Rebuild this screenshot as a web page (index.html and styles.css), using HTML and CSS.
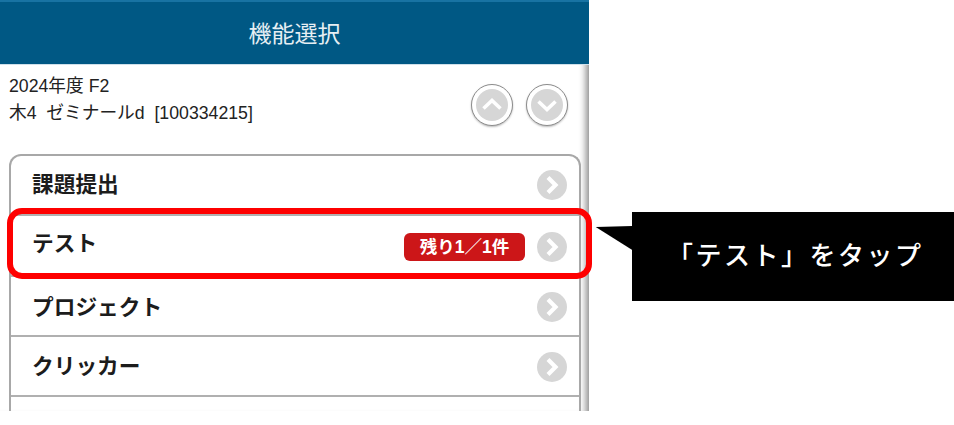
FILE: index.html
```html
<!DOCTYPE html>
<html lang="ja">
<head>
<meta charset="utf-8">
<title>機能選択</title>
<link rel="stylesheet" href="styles.css">
</head>
<body>
<div class="stage">
  <main class="phone">
    <header class="bar">機能選択</header>
    <section class="course">
      <div class="course-text">
        <div>2024年度 F2</div>
        <div>木4&nbsp; ゼミナールd&nbsp; [100334215]</div>
      </div>
      <div class="pager">
        <span class="round"><svg viewBox="0 0 38 38"><circle cx="19" cy="19" r="16" fill="#d6d6d6"/><path d="M10.5 22.5 19 14.5 27.5 22.5" fill="none" stroke="#fff" stroke-width="3.6"/></svg></span>
        <span class="round"><svg viewBox="0 0 38 38"><circle cx="19" cy="19" r="16" fill="#d6d6d6"/><path d="M10.5 15.5 19 23.5 27.5 15.5" fill="none" stroke="#fff" stroke-width="3.6"/></svg></span>
      </div>
    </section>
    <ul class="menu">
      <li class="row row-first"><span class="label">課題提出</span><svg class="go" viewBox="0 0 30 30"><circle cx="15" cy="15" r="15" fill="#d6d6d6"/><path d="M11 7.5 18.5 15 11 22.5" fill="none" stroke="#fff" stroke-width="4.2"/></svg></li>
      <li class="row row-tall"><span class="label label-raised">テスト</span><span class="badge">残り1／1件</span><svg class="go" viewBox="0 0 30 30"><circle cx="15" cy="15" r="15" fill="#d6d6d6"/><path d="M11 7.5 18.5 15 11 22.5" fill="none" stroke="#fff" stroke-width="4.2"/></svg></li>
      <li class="row row-low"><span class="label label-mid">プロジェクト</span><svg class="go" viewBox="0 0 30 30"><circle cx="15" cy="15" r="15" fill="#d6d6d6"/><path d="M11 7.5 18.5 15 11 22.5" fill="none" stroke="#fff" stroke-width="4.2"/></svg></li>
      <li class="row row-low"><span class="label">クリッカー</span><svg class="go" viewBox="0 0 30 30"><circle cx="15" cy="15" r="15" fill="#d6d6d6"/><path d="M11 7.5 18.5 15 11 22.5" fill="none" stroke="#fff" stroke-width="4.2"/></svg></li>
      <li class="row row-last"><span class="label"></span><svg class="go" viewBox="0 0 30 30"><circle cx="15" cy="15" r="15" fill="#d6d6d6"/><path d="M11 7.5 18.5 15 11 22.5" fill="none" stroke="#fff" stroke-width="4.2"/></svg></li>
    </ul>
  </main>
  <div class="highlight"></div>
  <svg class="pointer" viewBox="0 0 38 26"><path d="M0 1 38 0V25Z" fill="#000"/></svg>
  <div class="note">「テスト」をタップ</div>
</div>
</body>
</html>
```
FILE: styles.css
```css
html, body {
  margin: 0;
  padding: 0;
  background: #fff;
}
.stage {
  position: relative;
  width: 954px;
  height: 425px;
  overflow: hidden;
  font-family: "Liberation Sans", "Noto Sans CJK JP", sans-serif;
}
.phone {
  width: 589px;
  height: 411px;
  overflow: hidden;
  background: #fff;
  box-shadow: inset -9px 0 7px -6px #8a8a8a;
}
.bar {
  height: 65px;
  box-sizing: border-box;
  border-top: 2px solid #1873a3;
  border-bottom: 1px solid #cfe0ea;
  background: #005884;
  color: #e6eef3;
  font-size: 23px;
  line-height: 64px;
  text-align: center;
}
.course {
  height: 89px;
  box-sizing: border-box;
  padding: 8px 21px 0 9px;
  display: flex;
  justify-content: space-between;
  font-size: 17.7px;
  line-height: 27px;
  color: #222;
}
.pager {
  display: flex;
  gap: 13px;
  padding-top: 11px;
}
.round {
  width: 42px;
  height: 42px;
  box-sizing: border-box;
  border: 1px solid #8c8c8c;
  border-radius: 50%;
  background: #fff;
  box-shadow: 0 1px 2px #bbb;
  padding: 1px;
}
.round svg {
  display: block;
  width: 38px;
  height: 38px;
}
.menu {
  list-style: none;
  margin: 0 8px 0 9px;
  padding: 0;
  border: 1px solid #a8a8a8;
  border-width: 2px 2px 0;
  border-radius: 12px 12px 0 0;
}
.row {
  height: 60px;
  box-sizing: border-box;
  border-bottom: 2px solid #b0b0b0;
  padding: 0 12px 0 21px;
  display: flex;
  align-items: center;
}
.row-first {
  padding-bottom: 1px;
}
.row-tall {
  height: 61px;
  padding-top: 2px;
}
.row-low {
  padding-top: 2px;
}
.row-last {
  height: 56px;
  border-bottom: 0;
  padding-top: 2px;
}
.label {
  flex: 1;
  margin-bottom: 5px;
  font-size: 21.7px;
  font-weight: 700;
  color: #1c1c1c;
}
.label-raised {
  margin-bottom: 10px;
}
.label-mid {
  margin-bottom: 3px;
}
.badge {
  width: 121px;
  height: 28px;
  margin-right: 12px;
  border-radius: 6px;
  background: #cc1618;
  color: #fff;
  font-size: 17.5px;
  font-weight: 700;
  line-height: 28px;
  text-align: center;
  white-space: nowrap;
}
.go {
  width: 30px;
  height: 30px;
}
.highlight {
  position: absolute;
  left: 7px;
  top: 208px;
  width: 585px;
  height: 71px;
  box-sizing: border-box;
  border: 6px solid #fe0000;
  border-radius: 15px;
}
.pointer {
  position: absolute;
  left: 595px;
  top: 226px;
  width: 38px;
  height: 25px;
}
.note {
  position: absolute;
  left: 632px;
  top: 212px;
  width: 322px;
  height: 89px;
  background: #000;
  color: #fff;
  font-family: "Noto Sans CJK JP", sans-serif;
  font-size: 26px;
  font-weight: 500;
  letter-spacing: 2.5px;
  line-height: 83px;
  padding-left: 35px;
  box-sizing: border-box;
  white-space: nowrap;
}
```
